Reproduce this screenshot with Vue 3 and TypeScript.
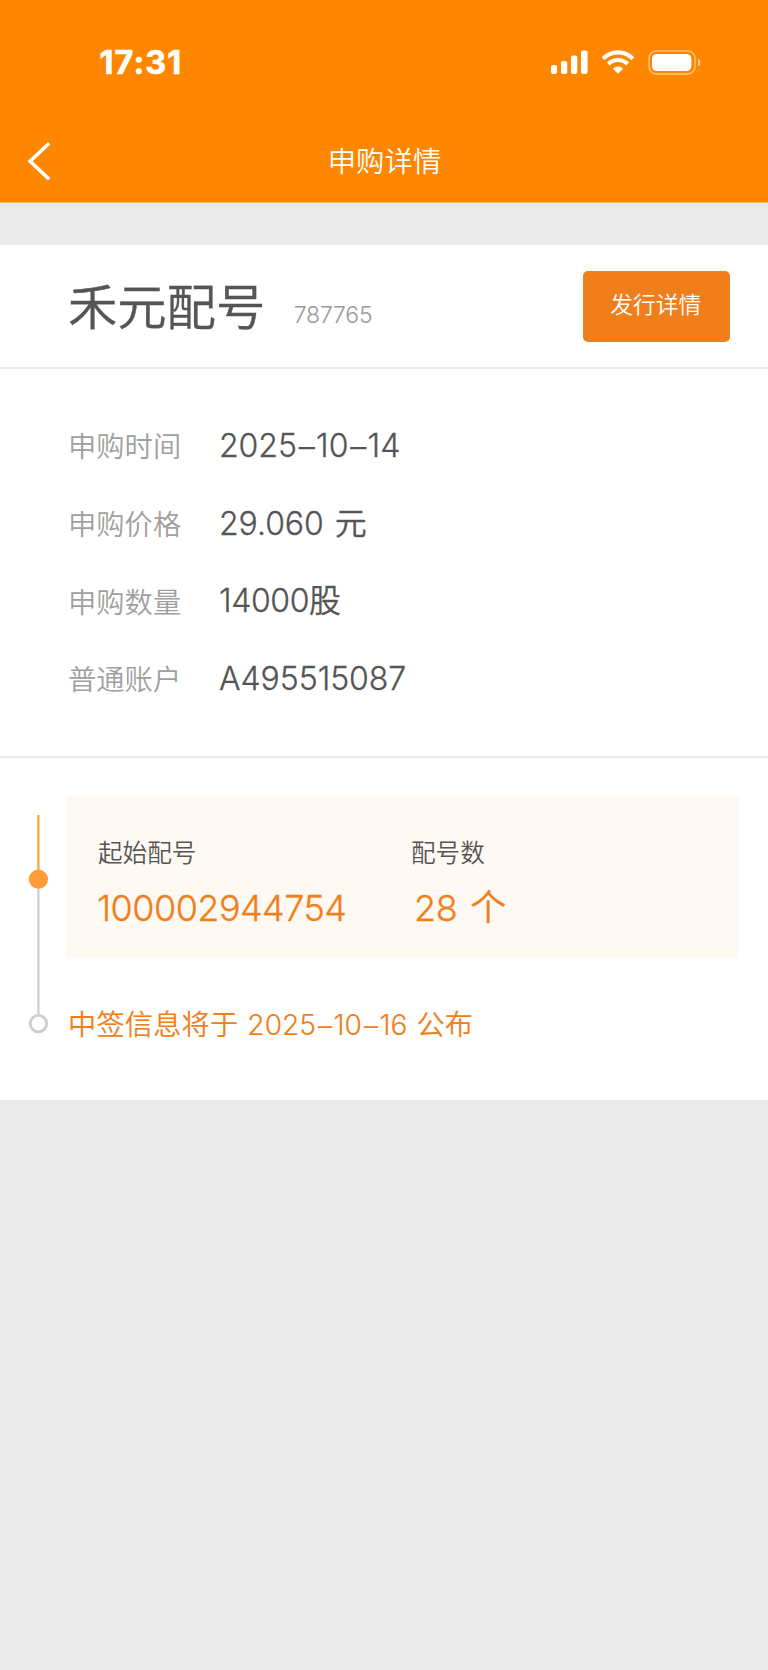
<script setup lang="ts">
interface DetailRow {
  label: string
  value: string
  kind: string
}

const rows: DetailRow[] = [
  { label: '申购时间', value: '2025–10–14', kind: 'date' },
  { label: '申购价格', value: '29.060 元', kind: 'price' },
  { label: '申购数量', value: '14000股', kind: 'amount' },
  { label: '普通账户', value: 'A495515087', kind: 'account' },
]

// Splits a value so that its dashes can be spaced wider than the digits.
const parts = (value: string): string[] => value.split(/(–)/)
</script>

<template>
  <div class="page">
    <header class="top">
      <div class="status">
        <span class="clock">17:31</span>
        <svg class="status-icons" width="152" height="26" viewBox="0 0 152 26">
          <g fill="#fff">
            <rect x="1" y="15" width="6" height="9" rx="2" />
            <rect x="11" y="11" width="6.3" height="13" rx="2" />
            <rect x="21" y="5.6" width="6.3" height="18.4" rx="2" />
            <rect x="31" y="0.4" width="6.6" height="23.6" rx="2.2" />
            <path d="M68 23.4 L63.2 18.7 Q68 15 72.8 18.7 Z" stroke="#fff" stroke-width="0.6" stroke-linejoin="round" />
          </g>
          <g fill="none" stroke="#fff" stroke-width="4.1">
            <path d="M53.1 8.7 C61.3 0.3 74.7 0.3 82.9 8.7" />
            <path d="M58.3 14 C63.7 8.7 72.3 8.7 77.7 14" />
          </g>
          <rect x="99" y="1" width="46" height="22.8" rx="7" fill="none" stroke="#fff" stroke-opacity=".45" stroke-width="1.7" />
          <rect x="102" y="3.9" width="39.4" height="17.2" rx="5" fill="#fff" />
          <path d="M148 8.5 Q150.3 9.8 150.3 12.4 Q150.3 15 148 16.3 Z" fill="#fff" fill-opacity=".55" />
        </svg>
      </div>
      <div class="nav">
        <svg class="back" width="26" height="40" viewBox="0 0 26 40">
          <path d="M23.2 2.2 L4.1 20.2 L23.2 38.2" fill="none" stroke="#fff" stroke-width="3.6" />
        </svg>
        <h1>申购详情</h1>
      </div>
    </header>

    <main class="sheet">
      <section class="heading">
        <h2>禾元配号</h2>
        <span class="code">787765</span>
        <button class="more" type="button">发行详情</button>
      </section>

      <dl class="details">
        <div v-for="row in rows" :key="row.kind" class="row">
          <dt>{{ row.label }}</dt>
          <dd :class="row.kind">
            <span v-for="(part, i) in parts(row.value)" :key="i" :class="{ dash: part === '–' }">{{ part }}</span>
          </dd>
        </div>
      </dl>

      <section class="progress">
        <svg class="track" width="20" height="220" viewBox="0 0 20 220">
          <path d="M10.4 0 V64" stroke="#ff9c38" stroke-width="2.2" />
          <path d="M10.4 64 V199.5" stroke="#cdcdcd" stroke-width="2.2" />
          <circle cx="10.4" cy="64.2" r="9.6" fill="#ff9c38" />
          <circle cx="10.4" cy="208.6" r="8.2" fill="#fff" stroke="#cdcdcd" stroke-width="2.8" />
        </svg>
        <div class="steps">
          <div class="card">
            <div class="cell start">
              <span class="cap">起始配号</span>
              <span class="num serial">100002944754</span>
            </div>
            <div class="cell">
              <span class="cap">配号数</span>
              <span class="num count">28 个</span>
            </div>
          </div>
          <p class="notice">
            <span class="lead">中签信息将于</span>
            <span class="day"><span v-for="(part, i) in parts('2025–10–16')" :key="i" :class="{ dash: part === '–' }">{{ part }}</span></span>
            <span>公布</span>
          </p>
        </div>
      </section>
    </main>
  </div>
</template>

<style>
body {
  margin: 0;
  background: #eaeaea;
}
</style>

<style scoped>
.page {
  width: 768px;
  min-height: 1670px;
  background: #eaeaea;
  color: #555;
  font-family: Inter, "Noto Sans CJK SC", sans-serif;
}
.top {
  height: 202px;
  background: #ff8700;
  color: #fff;
  border-bottom: 1px solid #f8b365;
}
.status {
  display: flex;
  justify-content: space-between;
  align-items: flex-start;
  height: 122px;
  padding: 50px 66px 0 99.5px;
  box-sizing: border-box;
}
.clock {
  font-size: 32.4px;
  line-height: 26px;
  font-weight: 700;
  letter-spacing: 1.1px;
  -webkit-text-stroke: 0.6px currentColor;
}
.nav {
  display: grid;
  grid-template-columns: 80px 1fr 80px;
  align-items: center;
  height: 78px;
}
.back {
  margin-left: 26px;
}
h1 {
  margin: 2px 0 0 1px;
  text-align: center;
  font-size: 28.4px;
  line-height: 40px;
  font-weight: 350;
}
.sheet {
  margin-top: 42px;
  height: 855px;
  background: #fff;
}
.heading {
  display: flex;
  align-items: flex-start;
  height: 122px;
  padding: 0 38px 0 68px;
  border-bottom: 2px solid #eaeaea;
}
h2 {
  margin: 27px 0 0;
  font-size: 49.3px;
  line-height: 70px;
  font-weight: 350;
  -webkit-text-stroke: 0.4px currentColor;
}
.code {
  margin: 55px 0 0 28.5px;
  font-size: 23px;
  line-height: 30px;
  font-weight: 300;
  letter-spacing: -0.2px;
  color: #999;
}
.more {
  margin: 26px 0 0 auto;
  width: 147.5px;
  height: 70.5px;
  padding: 0 1px 2px 0;
  border: 0;
  border-radius: 5px;
  background: #f07f1b;
  color: #fff;
  font: 350 22.8px/40px Inter, "Noto Sans CJK SC", sans-serif;
}
.details {
  margin: 0;
  height: 389px;
  padding: 38px 0 0 68px;
  box-sizing: border-box;
  border-bottom: 2px solid #eaeaea;
}
.row {
  display: flex;
  align-items: center;
  height: 77.7px;
}
dt {
  width: 151px;
  padding-top: 3px;
  font-size: 28.3px;
  line-height: 40px;
  font-weight: 350;
  color: #a0a0a0;
}
dd {
  margin: 0;
  font-size: 32px;
  line-height: 40px;
  font-weight: 350;
  letter-spacing: -0.05px;
  word-spacing: 2px;
  -webkit-text-stroke: 0.3px currentColor;
}
.amount {
  letter-spacing: -0.4px;
}
.dash {
  display: inline-block;
  margin: 0 1.3px 0 2px;
  transform: translateY(1px);
}
.progress {
  display: flex;
  padding: 38px 29px 0 28px;
}
.track {
  flex: none;
  margin: 19px 19px 0 0;
}
.steps {
  flex: 1;
}
.card {
  display: flex;
  height: 162px;
  padding: 37px 30px 0 31px;
  box-sizing: border-box;
  background: #fff9f3;
}
.cell {
  display: flex;
  flex-direction: column;
}
.start {
  width: 313px;
}
.cap {
  font-size: 24.6px;
  line-height: 40px;
  font-weight: 350;
}
.num {
  margin-top: 10px;
  font-size: 36px;
  line-height: 50px;
  font-weight: 350;
  color: #f07f1b;
  -webkit-text-stroke: 0.3px currentColor;
}
.serial {
  margin-left: -1px;
  letter-spacing: -0.55px;
}
.count {
  margin-left: 3px;
  letter-spacing: -0.3px;
  word-spacing: 3px;
}
.notice {
  display: flex;
  margin: 47px 0 0 1px;
  font-size: 28.2px;
  line-height: 40px;
  font-weight: 350;
  color: #f07f1b;
  white-space: nowrap;
  -webkit-text-stroke: 0.15px currentColor;
}
.lead {
  letter-spacing: 0.2px;
}
.day {
  margin: 0 9px;
}
</style>
